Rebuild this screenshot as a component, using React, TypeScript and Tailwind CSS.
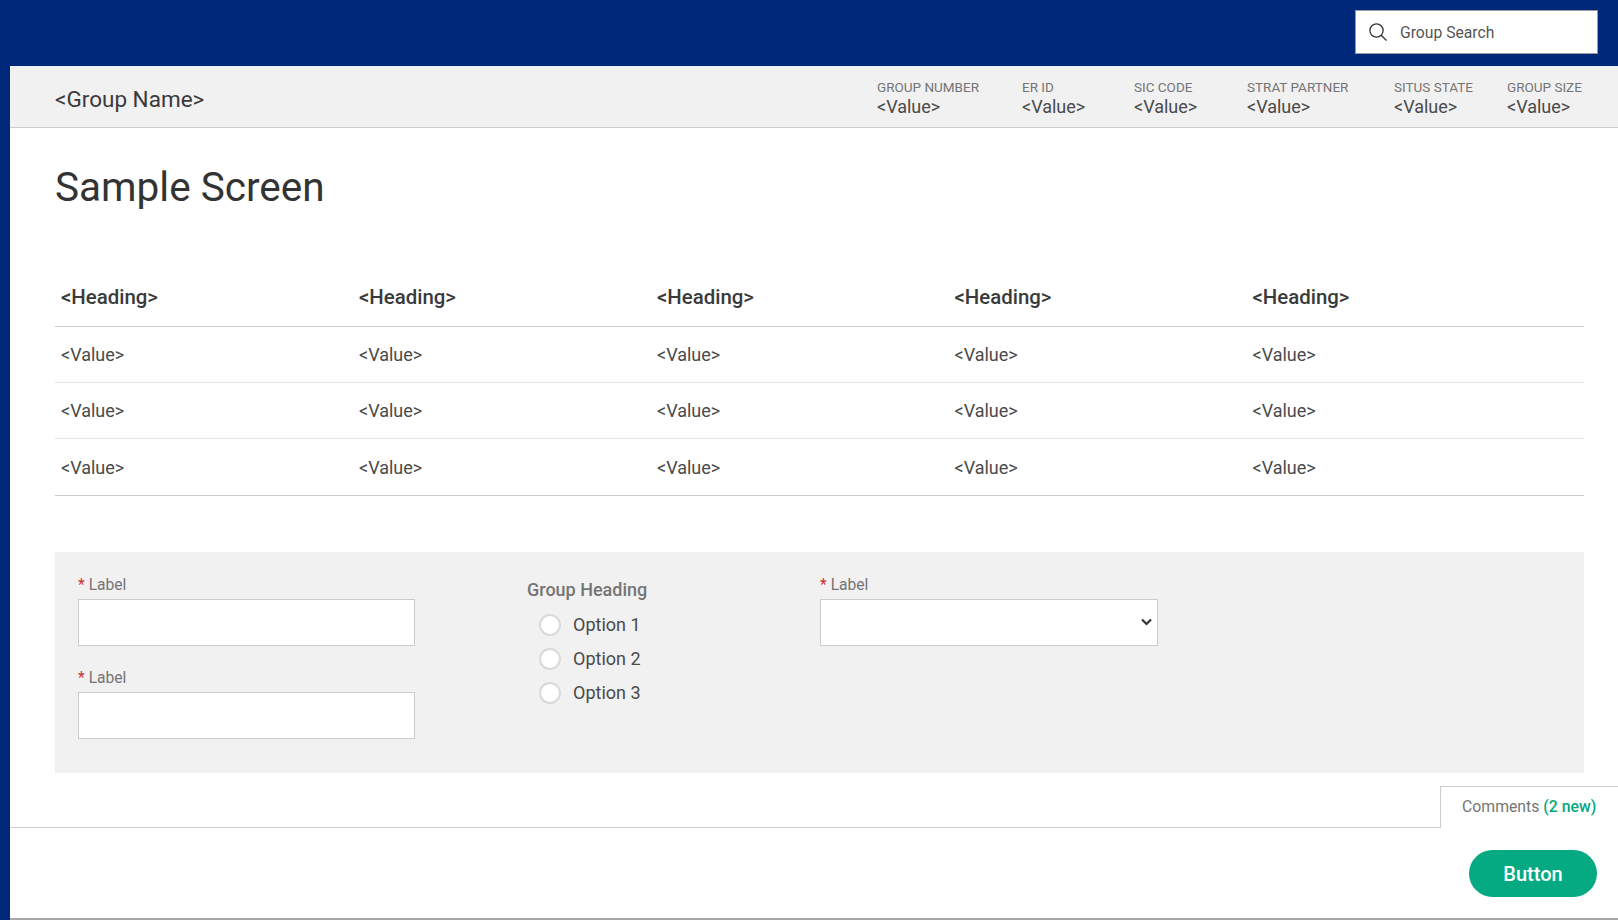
import React from "react";

const meta = [
  ["GROUP NUMBER", "w-[145px]"],
  ["ER ID", "w-[112px]"],
  ["SIC CODE", "w-[113px]"],
  ["STRAT PARTNER", "w-[147px]"],
  ["SITUS STATE", "w-[113px]"],
  ["GROUP SIZE", "w-[91px]"],
];

function Label({ text }: { text: string }) {
  return (
    <div className="h-[19px] text-[15.6px] leading-[20px] text-[#757575] mb-[5px]">
      <span className="text-[#d0342c] mr-[4px]">*</span>
      {text}
    </div>
  );
}

function Radio({ text }: { text: string }) {
  return (
    <label className="flex items-center h-[34px] pl-[12px]">
      <span className="w-[22px] h-[22px] rounded-full bg-white border-2 border-[#d9d9d9] mr-[12px]" />
      <span className="text-[18px] pb-[2px] text-[#4a4a4a]">{text}</span>
    </label>
  );
}

export default function App() {
  return (
    <div className="w-[1618px] h-[920px] overflow-hidden flex flex-col bg-[#00287a] font-['Roboto',sans-serif]">
      <div className="h-[66px] shrink-0 flex items-center justify-end pr-[20px]">
        <div className="w-[243px] h-[44px] mb-[2px] bg-white border border-[#9a9a9a] flex items-center pl-[13px]">
          <svg width="18" height="18" viewBox="0 0 18 18" fill="none" stroke="#333" strokeWidth="1.3">
            <circle cx="7.5" cy="7.5" r="6.6" />
            <path d="M12.2 12.2 L17.5 17.5" />
          </svg>
          <span className="ml-[13px] pt-[2px] text-[15.7px] text-[#555]">Group Search</span>
        </div>
      </div>
      <div className="flex-1 ml-[10px] bg-white flex flex-col min-h-0">
        <div className="h-[62px] shrink-0 bg-[#f1f1f1] border-b border-[#cccccc] flex items-center pl-[45px] pr-[20px]">
          <div className="flex-1 pt-[6px] text-[22.5px] text-[#3a3a3a]">&lt;Group Name&gt;</div>
          <div className="flex pt-[1px]">
            {meta.map(([t, w]) => (
              <div key={t} className={w}>
                <div className="text-[13.5px] leading-[18px] mb-[1px] text-[#757575] whitespace-nowrap">{t}</div>
                <div className="text-[18px] leading-[20px] text-[#4a4a4a]">&lt;Value&gt;</div>
              </div>
            ))}
          </div>
        </div>
        <div className="flex-1 relative pl-[45px] pr-[34px] min-h-0">
          <h1 className="mt-[34px] h-[50px] text-[40.5px] leading-[50px] text-[#333]">Sample Screen</h1>
          <div className="mt-[59px] grid grid-cols-[298px_298px_297.5px_298px_1fr] border-b border-[#cccccc]">
            {Array.from({ length: 5 }).map((_, i) => (
              <div key={i} className="h-[56px] pl-[6px] pb-[2px] flex items-center border-b border-[#cccccc] text-[20.4px] font-medium text-[#3a3a3a]">
                &lt;Heading&gt;
              </div>
            ))}
            {Array.from({ length: 15 }).map((_, i) => (
              <div key={i} className={"h-[56px] pl-[6px] flex items-center text-[18px] text-[#4a4a4a] " + (i < 10 ? "border-b border-[#e2e2e2]" : "")}>
                &lt;Value&gt;
              </div>
            ))}
          </div>
          <div className="mt-[56px] h-[221px] bg-[#f1f1f1] flex pl-[23px] pt-[23px]">
            <div className="w-[449px]">
              <Label text="Label" />
              <input className="block w-[337px] h-[47px] bg-white border border-[#cccccc]" />
              <div className="mt-[22px]">
                <Label text="Label" />
                <input className="block w-[337px] h-[47px] bg-white border border-[#cccccc]" />
              </div>
            </div>
            <div className="w-[293px]">
              <div className="text-[18px] leading-[22px] mt-[4px] mb-[7px] font-medium text-[#757575]">Group Heading</div>
              <Radio text="Option 1" />
              <Radio text="Option 2" />
              <Radio text="Option 3" />
            </div>
            <div>
              <Label text="Label" />
              <div className="relative w-[338px]">
                <select className="block w-full h-[47px] appearance-none bg-white border border-[#cccccc]" />
                <svg className="absolute right-[6px] top-[19px] pointer-events-none" width="11" height="8" viewBox="0 0 11 8" fill="none" stroke="#333" strokeWidth="2.2">
                  <path d="M1 1.5 L5.5 6 L10 1.5" />
                </svg>
              </div>
            </div>
          </div>
        </div>
        <div className="h-[93px] shrink-0 relative border-t border-[#cccccc] border-b-2 border-b-[#a6a6a6] flex items-center justify-end pr-[21px]">
          <div className="absolute right-0 top-[-42px] h-[42px] w-[178px] pb-[1px] bg-white border-l border-t border-[#cccccc] flex items-center pl-[21px] text-[15.8px] text-[#757575] whitespace-nowrap">
            Comments&nbsp;<span className="font-medium text-[#05a67f]">(2 new)</span>
          </div>
          <button className="w-[128px] h-[47px] mt-[1px] rounded-full bg-[#05aa83] text-white text-[20px] font-medium">Button</button>
        </div>
      </div>
    </div>
  );
}
